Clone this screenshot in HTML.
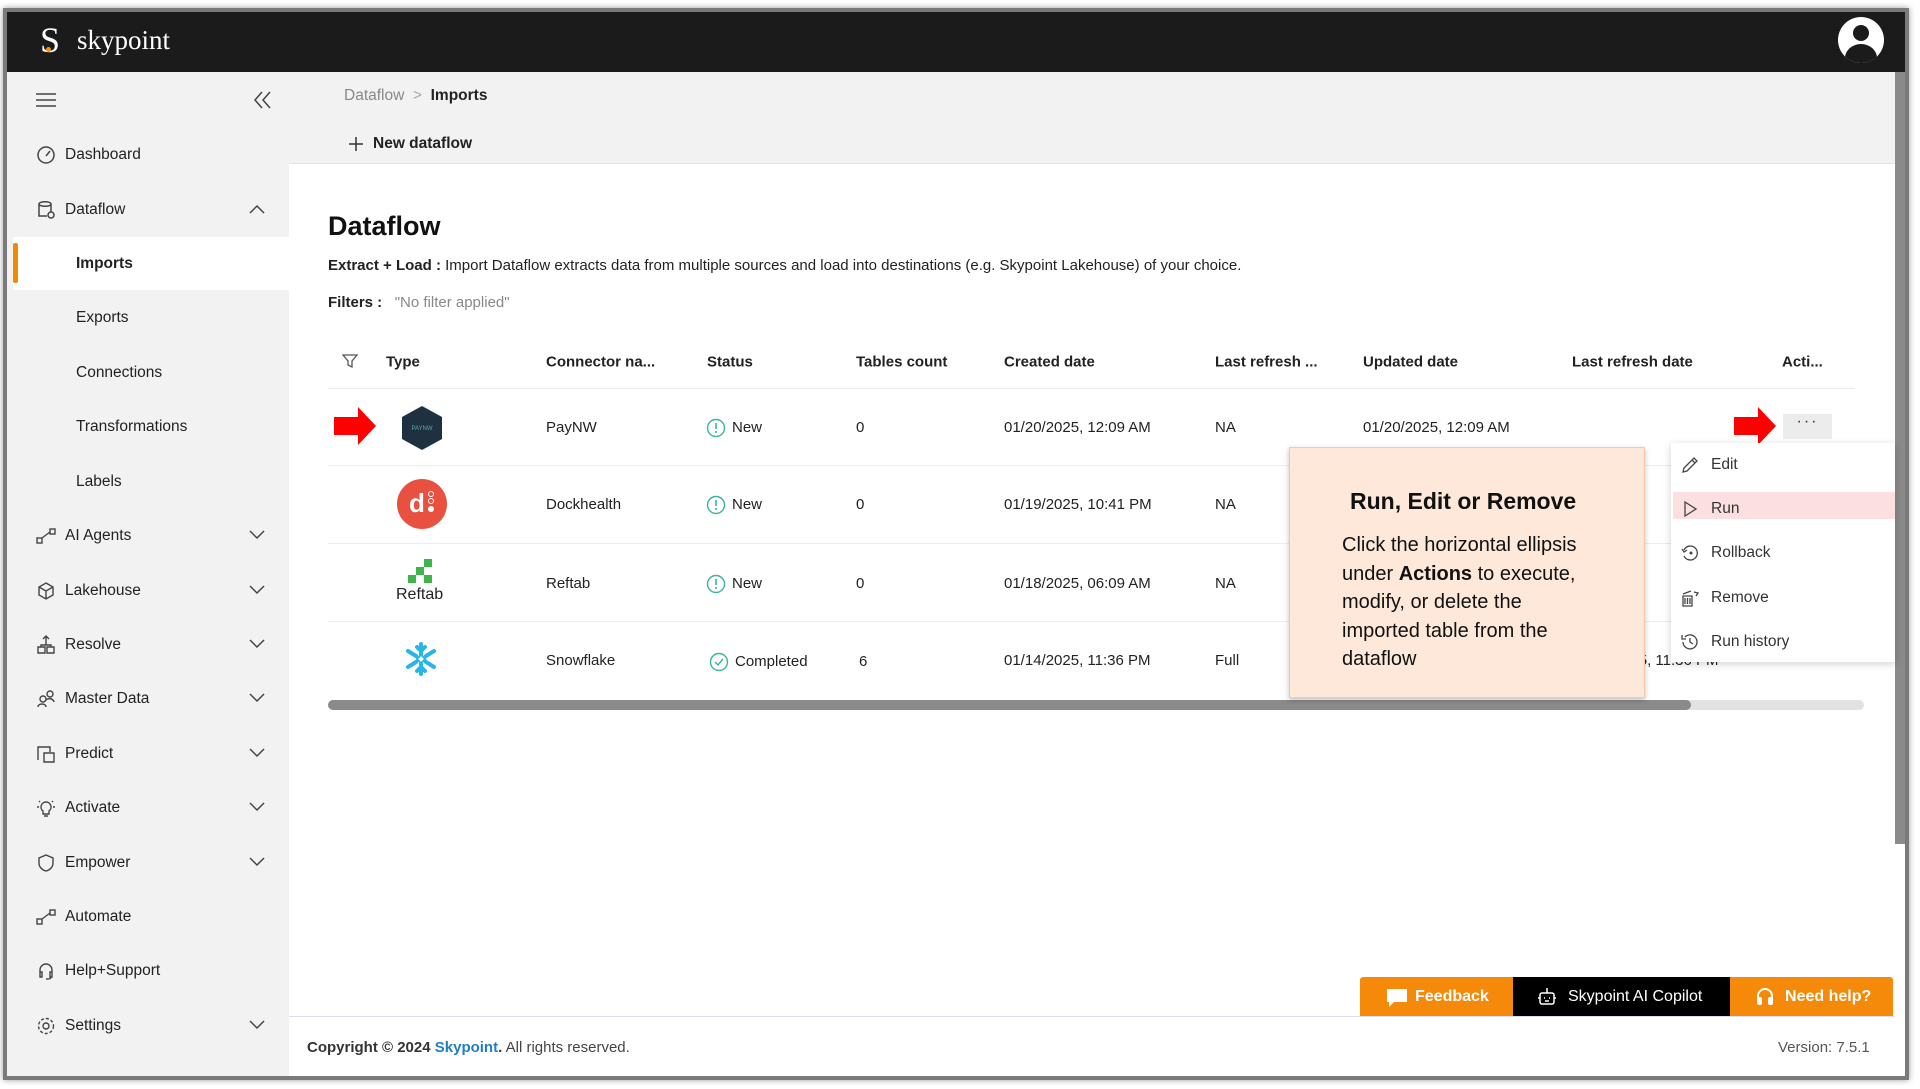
<!DOCTYPE html>
<html><head><meta charset="utf-8"><style>
*{box-sizing:border-box;margin:0;padding:0}
body{width:1920px;height:1089px;background:#fff;font-family:"Liberation Sans",sans-serif;color:#222;position:relative;overflow:hidden;font-size:15px}
.a{position:absolute;white-space:nowrap}
.frame{position:absolute;left:3px;top:8px;width:1906px;height:1072px;border:4px solid #7a7a7a;box-shadow:0 0 6px rgba(0,0,0,.4)}
.top{position:absolute;left:7px;top:12px;width:1898px;height:60px;background:#1b1b1b}
.side{position:absolute;left:7px;top:72px;width:282px;height:1004px;background:#f2f2f2}
.hdr{position:absolute;left:289px;top:72px;width:1606px;height:92px;background:#f2f2f2;border-bottom:1px solid #e3e3e3}
.si{position:absolute;left:65px;font-size:15.5px;color:#222;transform:translateY(-40%)}
.sub{left:76px}
.ic{position:absolute;left:36px;transform:translateY(-40%)}
.chev{position:absolute;left:249px;transform:translateY(-40%)}
.th{position:absolute;top:362px;transform:translateY(-50%);font-weight:bold;font-size:15px;color:#222}
.td{position:absolute;transform:translateY(-40%);font-size:15px;color:#222;white-space:nowrap}
.rl{position:absolute;left:328px;width:1527px;height:1px;background:#ececec}
.mi{position:absolute;left:1711px;transform:translateY(-40%);font-size:15.5px;color:#333}
.mic{position:absolute;left:1680px;transform:translateY(-40%)}
</style></head><body>
<div class="frame"></div>
<div class="top"></div>
<div class="a" style="left:40px;top:18px;font-family:'Liberation Serif',serif;font-size:36px;color:#fff;line-height:44px">S</div>
<div class="a" style="left:46px;top:47px;width:5px;height:5px;border-radius:50%;background:#f39200"></div>
<div class="a" style="left:77px;top:23px;font-family:'Liberation Serif',serif;font-size:27px;color:#fff;line-height:34px">skypoint</div>
<div class="a" style="left:1838px;top:17px;width:46px;height:46px;border-radius:50%;background:#fff;overflow:hidden">
<div class="a" style="left:15px;top:8px;width:16px;height:16px;border-radius:50%;background:#1b1b1b"></div>
<div class="a" style="left:7px;top:27px;width:32px;height:28px;border-radius:50%;background:#1b1b1b"></div></div>
<div class="a" style="left:1895px;top:72px;width:10px;height:772px;background:#8a8a8a"></div>

<div class="side"></div>
<svg class="a" style="left:36px;top:92px" width="20" height="16"><path d="M0 2h20M0 8h20M0 14h20" stroke="#444" stroke-width="1.5"/></svg>
<svg class="a" style="left:253px;top:90px" width="20" height="20"><path d="M9 2L2 10l7 8M17 2l-7 8 7 8" stroke="#444" stroke-width="1.5" fill="none"/></svg>
<div class="a" style="left:13px;top:237px;width:276px;height:53px;background:#fff"></div>
<div class="a" style="left:13px;top:243px;width:5px;height:40px;background:#f08a00;border-radius:2px"></div>

<svg class="ic" style="top:153px" width="20" height="20"><circle cx="10" cy="10" r="8" stroke="#444" stroke-width="1.5" fill="none"/><path d="M10 11l4-5" stroke="#444" stroke-width="1.5"/></svg><div class="si" style="top:153px">Dashboard</div>
<svg class="ic" style="top:208px" width="20" height="20"><path d="M3 4c0-3 12-3 12 0v8M3 4v12h8M3 4c0 3 12 3 12 0" stroke="#444" stroke-width="1.5" fill="none"/><circle cx="15" cy="15" r="3" stroke="#444" stroke-width="1.5" fill="none"/></svg><div class="si" style="top:208px">Dataflow</div>
<svg class="chev" style="top:208px" width="16" height="10"><path d="M1 9l7-7 7 7" stroke="#444" stroke-width="1.5" fill="none"/></svg>
<div class="si sub" style="top:262px;font-weight:bold">Imports</div>
<div class="si sub" style="top:316px">Exports</div>
<div class="si sub" style="top:371px">Connections</div>
<div class="si sub" style="top:425px">Transformations</div>
<div class="si sub" style="top:480px">Labels</div>

<svg class="ic" style="top:534px" width="20" height="20"><rect x="1" y="12" width="5" height="5" stroke="#444" fill="none" stroke-width="1.4"/><rect x="14" y="3" width="5" height="5" stroke="#444" fill="none" stroke-width="1.4"/><path d="M6 12l8-6" stroke="#444" stroke-width="1.4"/></svg><div class="si" style="top:534px">AI Agents</div>
<svg class="ic" style="top:589px" width="20" height="20"><path d="M10 2l7 4v8l-7 4-7-4V6zM3 6l7 4 7-4M10 10v8" stroke="#444" stroke-width="1.4" fill="none"/></svg><div class="si" style="top:589px">Lakehouse</div>
<svg class="ic" style="top:643px" width="20" height="20"><path d="M10 1v9M7 4l3-3 3 3M2 18v-6h7v6zM11 18v-6h7v6zM5 12v-2h10v2" stroke="#444" stroke-width="1.4" fill="none"/></svg><div class="si" style="top:643px">Resolve</div>
<svg class="ic" style="top:697px" width="20" height="20"><circle cx="7" cy="10" r="3" stroke="#444" stroke-width="1.4" fill="none"/><circle cx="14" cy="5" r="3" stroke="#444" stroke-width="1.4" fill="none"/><path d="M2 18c0-4 8-4 8 0M10 11c2-2 7-2 8 2" stroke="#444" stroke-width="1.4" fill="none"/></svg><div class="si" style="top:697px">Master Data</div>
<svg class="ic" style="top:752px" width="20" height="20"><path d="M2 16V3h12v5M8 9h10v9H8z" stroke="#444" stroke-width="1.4" fill="none"/></svg><div class="si" style="top:752px">Predict</div>
<svg class="ic" style="top:806px" width="20" height="20"><path d="M10 4a5 5 0 0 0-3 9v3h6v-3a5 5 0 0 0-3-9zM8 18h4M1 9h2M17 9h2M3 3l1 1M17 3l-1 1" stroke="#444" stroke-width="1.4" fill="none"/></svg><div class="si" style="top:806px">Activate</div>
<svg class="ic" style="top:861px" width="20" height="20"><path d="M10 2l7 3v5c0 4-3 7-7 8-4-1-7-4-7-8V5z" stroke="#444" stroke-width="1.4" fill="none"/></svg><div class="si" style="top:861px">Empower</div>
<svg class="ic" style="top:915px" width="20" height="20"><rect x="1" y="12" width="5" height="5" stroke="#444" fill="none" stroke-width="1.4"/><rect x="14" y="3" width="5" height="5" stroke="#444" fill="none" stroke-width="1.4"/><path d="M6 12l8-6" stroke="#444" stroke-width="1.4"/></svg><div class="si" style="top:915px">Automate</div>
<svg class="ic" style="top:969px" width="20" height="20"><path d="M4 11V9a6 6 0 0 1 12 0v2M4 11h2v5H4zM14 11h2v5h-2zM15 16c0 2-2 2-5 2" stroke="#444" stroke-width="1.4" fill="none"/></svg><div class="si" style="top:969px">Help+Support</div>
<svg class="ic" style="top:1024px" width="20" height="20"><circle cx="10" cy="10" r="3" stroke="#444" stroke-width="1.4" fill="none"/><circle cx="10" cy="10" r="7.5" stroke="#444" stroke-width="1.4" fill="none" stroke-dasharray="3 2"/></svg><div class="si" style="top:1024px">Settings</div>
<svg class="chev" style="top:534px" width="16" height="10"><path d="M1 1l7 7 7-7" stroke="#444" stroke-width="1.5" fill="none"/></svg>
<svg class="chev" style="top:589px" width="16" height="10"><path d="M1 1l7 7 7-7" stroke="#444" stroke-width="1.5" fill="none"/></svg>
<svg class="chev" style="top:643px" width="16" height="10"><path d="M1 1l7 7 7-7" stroke="#444" stroke-width="1.5" fill="none"/></svg>
<svg class="chev" style="top:697px" width="16" height="10"><path d="M1 1l7 7 7-7" stroke="#444" stroke-width="1.5" fill="none"/></svg>
<svg class="chev" style="top:752px" width="16" height="10"><path d="M1 1l7 7 7-7" stroke="#444" stroke-width="1.5" fill="none"/></svg>
<svg class="chev" style="top:806px" width="16" height="10"><path d="M1 1l7 7 7-7" stroke="#444" stroke-width="1.5" fill="none"/></svg>
<svg class="chev" style="top:861px" width="16" height="10"><path d="M1 1l7 7 7-7" stroke="#444" stroke-width="1.5" fill="none"/></svg>
<svg class="chev" style="top:1024px" width="16" height="10"><path d="M1 1l7 7 7-7" stroke="#444" stroke-width="1.5" fill="none"/></svg>

<div class="hdr"></div>
<div class="a" style="left:344px;top:87px;font-size:15.5px;color:#888">Dataflow <span style="color:#aaa">&nbsp;&gt;&nbsp;</span> <b style="color:#222">Imports</b></div>
<svg class="a" style="left:348px;top:136px" width="16" height="16"><path d="M8 1v14M1 8h14" stroke="#333" stroke-width="1.5"/></svg>
<div class="a" style="left:373px;top:135px;font-size:15.5px;font-weight:bold;color:#222">New dataflow</div>

<div class="a" style="left:328px;top:211px;font-size:27px;font-weight:bold;color:#111">Dataflow</div>
<div class="a" style="left:328px;top:257px;font-size:15px"><b>Extract + Load :</b> Import Dataflow extracts data from multiple sources and load into destinations (e.g. Skypoint Lakehouse) of your choice.</div>
<div class="a" style="left:328px;top:294px;font-size:15px"><b>Filters :</b> &nbsp;&nbsp;<span style="color:#888">"No filter applied"</span></div>

<svg class="a" style="left:342px;top:353px" width="16" height="16"><path d="M1 2h14l-5 6v6l-4-2V8z" stroke="#555" stroke-width="1.3" fill="none"/></svg>
<div class="th" style="left:386px">Type</div>
<div class="th" style="left:546px">Connector na...</div>
<div class="th" style="left:707px">Status</div>
<div class="th" style="left:856px">Tables count</div>
<div class="th" style="left:1004px">Created date</div>
<div class="th" style="left:1215px">Last refresh ...</div>
<div class="th" style="left:1363px">Updated date</div>
<div class="th" style="left:1572px">Last refresh date</div>
<div class="th" style="left:1782px">Acti...</div>
<div class="rl" style="top:388px"></div><div class="rl" style="top:465px"></div><div class="rl" style="top:543px"></div><div class="rl" style="top:621px"></div>

<svg class="a" style="left:400px;top:404px" width="44" height="46"><path d="M22 2l20 11v22L22 46 2 35V13z" fill="#1f3140"/><text x="22" y="26" font-size="6" fill="#5aa" text-anchor="middle" font-family="Liberation Sans">PAYNW</text></svg>
<svg class="a" style="left:396px;top:478px" width="52" height="52"><circle cx="26" cy="26" r="25" fill="#e8503f"/><text x="21" y="34" font-size="26" font-weight="bold" fill="#fff" text-anchor="middle" font-family="Liberation Sans">d</text><circle cx="35" cy="16" r="2.5" fill="none" stroke="#fff"/><circle cx="35" cy="23" r="2.5" fill="none" stroke="#fff"/><circle cx="35" cy="31" r="3" fill="#fff"/></svg>
<svg class="a" style="left:408px;top:558px" width="30" height="28"><rect x="16" y="1" width="8" height="8" fill="#3db54a"/><rect x="8" y="9" width="8" height="8" fill="#3db54a"/><rect x="0" y="17" width="8" height="8" fill="#3db54a"/><rect x="16" y="17" width="8" height="8" fill="#3db54a"/></svg>
<div class="a" style="left:396px;top:586px;font-size:16px;color:#222">Reftab</div>
<svg class="a" style="left:403px;top:641px" width="36" height="36" viewBox="0 0 36 36"><g stroke="#29b5e8" stroke-width="4" stroke-linecap="round" fill="none"><path d="M18 3v10M18 23v10M5 10l8 5M23 21l8 5M5 26l8-5M23 15l8-5"/><path d="M14 6l4 4 4-4M14 30l4-4 4 4"/></g><rect x="15" y="15" width="6" height="6" transform="rotate(45 18 18)" fill="none" stroke="#29b5e8" stroke-width="2"/></svg>

<div class="td" style="left:546px;top:426px">PayNW</div>
<div class="td" style="left:546px;top:503px">Dockhealth</div>
<div class="td" style="left:546px;top:582px">Reftab</div>
<div class="td" style="left:546px;top:659px">Snowflake</div>
<svg class="td" style="left:706px;top:426px" width="20" height="20"><circle cx="10" cy="10" r="8.5" stroke="#3cb4a0" stroke-width="1.4" fill="none"/><path d="M10 5v6M10 13v2" stroke="#3cb4a0" stroke-width="1.6"/></svg><div class="td" style="left:732px;top:426px">New</div>
<svg class="td" style="left:706px;top:503px" width="20" height="20"><circle cx="10" cy="10" r="8.5" stroke="#3cb4a0" stroke-width="1.4" fill="none"/><path d="M10 5v6M10 13v2" stroke="#3cb4a0" stroke-width="1.6"/></svg><div class="td" style="left:732px;top:503px">New</div>
<svg class="td" style="left:706px;top:582px" width="20" height="20"><circle cx="10" cy="10" r="8.5" stroke="#3cb4a0" stroke-width="1.4" fill="none"/><path d="M10 5v6M10 13v2" stroke="#3cb4a0" stroke-width="1.6"/></svg><div class="td" style="left:732px;top:582px">New</div>
<svg class="td" style="left:709px;top:660px" width="20" height="20"><circle cx="10" cy="10" r="8.5" stroke="#3cb4a0" stroke-width="1.4" fill="none"/><path d="M6 10l3 3 5-6" stroke="#3cb4a0" stroke-width="1.4" fill="none"/></svg><div class="td" style="left:735px;top:660px">Completed</div>
<div class="td" style="left:856px;top:426px">0</div><div class="td" style="left:856px;top:503px">0</div><div class="td" style="left:856px;top:582px">0</div><div class="td" style="left:859px;top:660px">6</div>
<div class="td" style="left:1004px;top:426px">01/20/2025, 12:09 AM</div>
<div class="td" style="left:1004px;top:503px">01/19/2025, 10:41 PM</div>
<div class="td" style="left:1004px;top:582px">01/18/2025, 06:09 AM</div>
<div class="td" style="left:1004px;top:659px">01/14/2025, 11:36 PM</div>
<div class="td" style="left:1215px;top:426px">NA</div><div class="td" style="left:1215px;top:503px">NA</div><div class="td" style="left:1215px;top:582px">NA</div><div class="td" style="left:1215px;top:659px">Full</div>
<div class="td" style="left:1363px;top:426px">01/20/2025, 12:09 AM</div>
<div class="td" style="left:1572px;top:659px">01/14/2025, 11:36 PM</div>

<div class="a" style="left:328px;top:700px;width:1536px;height:10px;background:#e2e2e2;border-radius:5px"></div>
<div class="a" style="left:328px;top:700px;width:1363px;height:10px;background:#8a8a8a;border-radius:5px"></div>

<svg class="a" style="left:332px;top:403px" width="46" height="46"><path d="M2 14h24V4l18 19-18 19V32H2z" fill="#f00"/></svg>
<svg class="a" style="left:1732px;top:403px" width="46" height="46"><path d="M2 14h24V4l18 19-18 19V32H2z" fill="#f00"/></svg>
<div class="a" style="left:1783px;top:414px;width:49px;height:25px;background:#ececec;text-align:center;font-size:16px;line-height:16px;letter-spacing:2px;color:#333">···</div>

<div class="a" style="left:1289px;top:447px;width:356px;height:251px;background:#fde8da;border:1px solid #f4c8a8;box-shadow:0 2px 5px rgba(0,0,0,.25)"></div>
<div class="a" style="left:1350px;top:488px;font-size:23px;font-weight:bold;color:#111">Run, Edit or Remove</div>
<div class="a" style="left:1342px;top:531px;font-size:20px;line-height:28.5px;color:#111;white-space:normal;width:262px">Click the horizontal ellipsis under <b>Actions</b> to execute, modify, or delete the imported table from the dataflow</div>

<div class="a" style="left:1671px;top:443px;width:224px;height:219px;background:#fff;box-shadow:0 2px 8px rgba(0,0,0,.18)"></div>
<div class="a" style="left:1673px;top:492px;width:222px;height:27px;background:#fcdfe0"></div>
<svg class="mic" style="top:463px" width="20" height="20"><path d="M3 17l1-4L14 3l3 3L7 16zM12 5l3 3" stroke="#444" stroke-width="1.3" fill="none"/></svg><div class="mi" style="top:463px">Edit</div>
<svg class="mic" style="top:507px" width="20" height="20"><path d="M5 3l11 7-11 7z" stroke="#444" stroke-width="1.3" fill="none"/></svg><div class="mi" style="top:507px">Run</div>
<svg class="mic" style="top:551px" width="20" height="20"><path d="M4 7a7 7 0 1 1 0 6M2 6l2 3 3-2" stroke="#444" stroke-width="1.3" fill="none"/><circle cx="11" cy="10" r="1.5" fill="#444"/></svg><div class="mi" style="top:551px">Rollback</div>
<svg class="mic" style="top:596px" width="20" height="20"><path d="M3 8h9v10H3zM5 10v6M7.5 10v6M10 10v6M3 6l8-3M14 4l4 1-2 3" stroke="#444" stroke-width="1.3" fill="none"/></svg><div class="mi" style="top:596px">Remove</div>
<svg class="mic" style="top:640px" width="20" height="20"><path d="M3 10a7 7 0 1 0 2-5M2 3v4h4M10 6v4l3 2" stroke="#444" stroke-width="1.3" fill="none"/></svg><div class="mi" style="top:640px">Run history</div>

<div class="a" style="left:289px;top:1016px;width:1606px;height:1px;background:#dde"></div>
<div class="a" style="left:1360px;top:977px;width:153px;height:39px;background:#f5890a;color:#fff;font-weight:bold;font-size:16px;line-height:39px;padding-left:55px;border-radius:3px 0 0 0">Feedback</div>
<svg class="a" style="left:1386px;top:988px" width="22" height="20"><path d="M1 1h20v13H8l-5 5v-5H1z" fill="#fff"/></svg>
<div class="a" style="left:1513px;top:977px;width:217px;height:39px;background:#000;color:#fff;font-size:16px;line-height:39px;padding-left:55px">Skypoint AI Copilot</div>
<svg class="a" style="left:1537px;top:987px" width="20" height="22"><rect x="3" y="6" width="14" height="11" rx="2" stroke="#fff" stroke-width="1.5" fill="none"/><path d="M10 1v5M1 11h2M17 11h2M7 11h1M12 11h1M8 14h4" stroke="#fff" stroke-width="1.5"/></svg>
<div class="a" style="left:1730px;top:977px;width:163px;height:39px;background:#f5890a;color:#fff;font-weight:bold;font-size:16px;line-height:39px;padding-left:55px;border-radius:0 3px 0 0">Need help?</div>
<svg class="a" style="left:1755px;top:987px" width="20" height="22"><path d="M3 11V9a7 7 0 0 1 14 0v2" stroke="#fff" stroke-width="2" fill="none"/><rect x="2" y="10" width="5" height="8" rx="2" fill="#fff"/><rect x="13" y="10" width="5" height="8" rx="2" fill="#fff"/></svg>
<div class="a" style="left:307px;top:1039px;font-size:15px;color:#444"><b style="color:#333">Copyright © 2024 <span style="color:#1f7fc4">Skypoint</span>.</b> All rights reserved.</div>
<div class="a" style="left:1778px;top:1039px;font-size:15px;color:#555">Version: 7.5.1</div>
</body></html>
